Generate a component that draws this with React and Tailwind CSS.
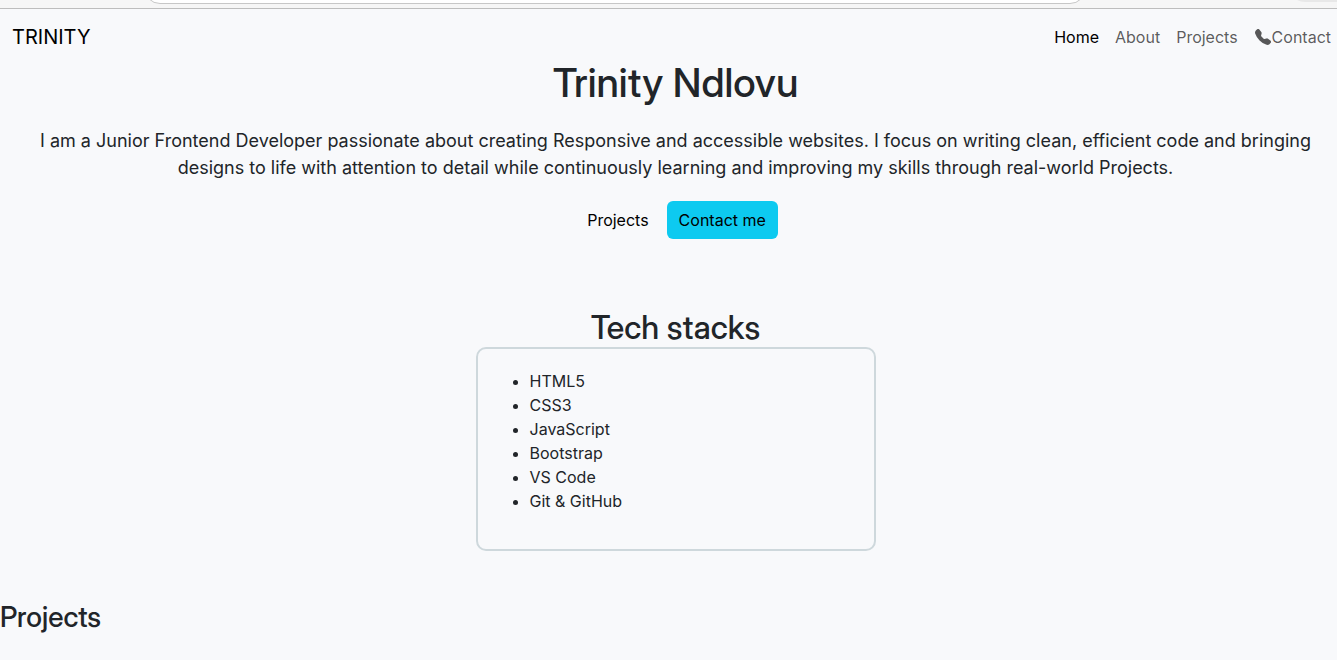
import { BsTelephoneFill } from 'react-icons/bs';

const stacks = ['HTML5', 'CSS3', 'JavaScript', 'Bootstrap', 'VS Code', 'Git & GitHub'];

function BrowserBar() {
  return (
    <div className="flex h-[9px] items-end justify-between overflow-hidden border-b border-[#bdbdbd] bg-[#f6f6f6] pl-36">
      <div className="mb-1 h-8 w-[942px] shrink-0 rounded-full border border-[#c7c7c7] bg-white" />
      <div className="mb-1.5 h-8 w-12 rounded-bl-2xl bg-[#e8e8e8]" />
    </div>
  );
}

function Navbar() {
  return (
    <nav className="flex items-center justify-between py-2 pl-3 pr-1.5">
      <a href="#home" className="text-xl leading-[30px] text-black">TRINITY</a>
      <div className="flex items-center gap-4 leading-10 text-black/65">
        <a href="#home" className="text-black">Home</a>
        <a href="#about">About</a>
        <a href="#projects">Projects</a>
        <a href="#contact" className="flex items-center">
          <BsTelephoneFill className="mx-px" aria-hidden="true" />
          Contact
        </a>
      </div>
    </nav>
  );
}

export default function App() {
  return (
    <div className="min-h-screen overflow-hidden bg-[#f8f9fb] font-[Inter,sans-serif] text-base text-[#212529]">
      <BrowserBar />
      <Navbar />

      <main>
        <section id="home" className="pl-10 pr-[26px] text-center">
          <h1 className="font-['Inter_Display',Inter,sans-serif] text-[40px] font-medium leading-9">Trinity Ndlovu</h1>
          <p className="mt-[26px] text-lg leading-[27px]">
            I am a Junior Frontend Developer passionate about creating Responsive and accessible websites. I focus on
            writing clean, efficient code and bringing designs to life with attention to detail while continuously
            learning and improving my skills through real-world Projects.
          </p>
          <div className="mt-5 flex justify-center gap-1">
            <button type="button" className="rounded-md px-3.5 py-[7px] text-black">Projects</button>
            <button type="button" className="rounded-md bg-[#0dcaf0] px-3 py-[7px] text-black">Contact me</button>
          </div>
        </section>

        <section id="about" className="mt-[70px] flex flex-col items-center pl-3.5">
          <h2 className="font-['Inter_Display',Inter,sans-serif] text-[32px] font-medium leading-[38px]">Tech stacks</h2>
          <div className="w-[400px] max-w-full rounded-[10px] border-2 border-[#ced8dc] p-5 pb-9">
            <ul className="list-disc pl-8">
              {stacks.map(stack => (
                <li key={stack}>{stack}</li>
              ))}
            </ul>
          </div>
        </section>

        <section id="projects" className="mt-12">
          <h2 className="font-['Inter_Display',Inter,sans-serif] text-[28px] font-medium leading-9">Projects</h2>
        </section>
      </main>
    </div>
  );
}
